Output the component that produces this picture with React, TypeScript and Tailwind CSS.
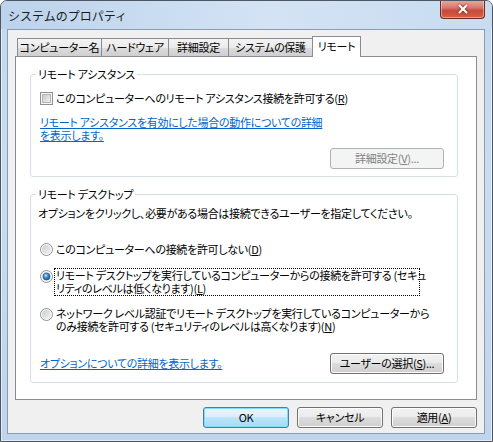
import { X } from 'lucide-react'

const tabs = [
  { label: 'コンピューター名', w: 'w-[85px]' },
  { label: 'ハードウェア', w: 'w-[68px]' },
  { label: '詳細設定', w: 'w-[61px]' },
  { label: 'システムの保護', w: 'w-[85px]' },
]

function Radio({ checked, className = '' }: { checked?: boolean; className?: string }) {
  return (
    <svg width="13" height="13" viewBox="0 0 13 13" className={`shrink-0 ${className}`}>
      <defs>
        <linearGradient id="rfill" x1="0" y1="0" x2="1" y2="1">
          <stop offset="0" stopColor="#c9cbce" />
          <stop offset="1" stopColor="#f4f4f4" />
        </linearGradient>
        <radialGradient id="rdot" cx="0.4" cy="0.35" r="0.7">
          <stop offset="0" stopColor="#c4e8fd" />
          <stop offset="0.45" stopColor="#3a8fd6" />
          <stop offset="1" stopColor="#14508c" />
        </radialGradient>
      </defs>
      <circle cx="6.5" cy="6.5" r="6" fill="#ffffff" stroke="#8e8f8f" />
      <circle cx="6.5" cy="6.5" r="4.5" fill="url(#rfill)" />
      {checked && <circle cx="6.5" cy="6.5" r="3.5" fill="url(#rdot)" stroke="#1c5180" strokeWidth="0.6" />}
    </svg>
  )
}

function Checkbox() {
  return (
    <svg width="13" height="13" viewBox="0 0 13 13" className="shrink-0">
      <defs>
        <linearGradient id="cfill" x1="0" y1="0" x2="1" y2="1">
          <stop offset="0" stopColor="#c3c6cb" />
          <stop offset="1" stopColor="#f3f3f3" />
        </linearGradient>
      </defs>
      <rect x="0.5" y="0.5" width="12" height="12" fill="#f6f6f6" stroke="#8e8f8f" />
      <rect x="2.5" y="2.5" width="8" height="8" fill="url(#cfill)" stroke="#b3b6ba" />
    </svg>
  )
}

function Button({ children, w, kind = 'normal', className = '' }: { children: React.ReactNode; w: string; kind?: 'normal' | 'default' | 'disabled'; className?: string }) {
  const look =
    kind === 'default'
      ? 'border-[#3c7fb1] bg-[linear-gradient(#e9f5fc,#d9effb_50%,#bde5fb_50%,#a8d9f4)] shadow-[inset_0_0_0_1px_#7fdcfd]'
      : kind === 'disabled'
      ? 'border-[#adb2b5] bg-[#f4f4f4] text-[#838383]'
      : 'border-[#707070] bg-[linear-gradient(#f2f2f2,#ebebeb_50%,#dddddd_50%,#cfcfcf)] shadow-[inset_0_0_0_1px_#fcfcfc]'
  return (
    <div className={`${w} h-[21px] shrink-0 flex items-center justify-center rounded-[3px] border whitespace-nowrap ${look} ${className}`}>
      {children}
    </div>
  )
}

function Key({ k }: { k: string }) {
  return <span className="underline underline-offset-1">{k}</span>
}

export default function App() {
  return (
    <div className="w-[493px] h-[442px] flex flex-col border border-[#4e5662] rounded-t-[7px] bg-[linear-gradient(#c3d8ef,#c9dcf1_40%,#bfd5ee)] shadow-[inset_0_0_0_1px_rgba(255,255,255,0.55)] text-black text-[11px] leading-[13px] tracking-[-0.3px] font-['Noto_Sans_CJK_JP',sans-serif] [font-feature-settings:'palt'] overflow-hidden">

      {/* Title bar */}
      <div className="h-[28px] shrink-0 flex items-start justify-between pl-[7px] pr-[7px] bg-[linear-gradient(to_right,#bcd3ec,#d3e3f4_55%,#c8dbf0)]">
        <span className="mt-[7px] text-[12px] leading-[16px] tracking-normal [font-feature-settings:normal] text-[#1a1a1a]">システムのプロパティ</span>
        <div className="w-[45px] h-[19px] -mt-px flex items-center justify-center rounded-b-[4px] border border-[#6b2a22] border-t-0 bg-[linear-gradient(#e8aca3,#d77d70_40%,#c7483a_60%,#d8623f)] shadow-[inset_0_0_0_1px_rgba(255,220,210,0.5)]">
          <X size={14} strokeWidth={3.5} className="text-white drop-shadow-[0_0_1px_#4a1a14]" />
        </div>
      </div>

      {/* Client area */}
      <div className="flex-1 ml-[6px] mr-[7px] mb-[7px] border border-[#8c9bb0] bg-[#f0f0f0] px-[7px] pt-[6px] flex flex-col">

        {/* Tabs */}
        <div className="h-[20px] flex items-end pl-[2px]">
          {tabs.map((t, i) => (
            <div
              key={t.label}
              className={`${t.w} h-[18px] ${i > 0 ? '-ml-px' : ''} flex items-center justify-center border border-b-0 border-[#898c95] bg-[linear-gradient(#f3f3f3,#ebebeb_50%,#dddddd_50%,#cfcfcf)] whitespace-nowrap`}
            >
              {t.label}
            </div>
          ))}
          <div className="w-[49px] h-[21px] -ml-px -mb-px relative z-10 flex items-start justify-center pt-[3px] border border-b-0 border-[#898c95] bg-white">
            リモート
          </div>
        </div>

        {/* Tab panel */}
        <div className="h-[344px] shrink-0 border border-[#898c95] bg-white pl-[14px] pr-[18px] pt-[11px] flex flex-col">

          <fieldset className="border border-[#d5dfe5] rounded-[3px] flex flex-col pb-[7px]">
            <legend className="ml-[5px] px-[2px] leading-[13px]">リモート アシスタンス</legend>
            <div className="mt-[11px] ml-[9px] flex items-center gap-[3px] whitespace-nowrap">
              <Checkbox />
              <span>このコンピューターへのリモート アシスタンス接続を許可する(<Key k="R" />)</span>
            </div>
            <div className="mt-[11px] ml-[9px] text-[#0066cc] underline underline-offset-1 whitespace-nowrap">
              リモート アシスタンスを有効にした場合の動作についての詳細
              <br />
              を表示します。
            </div>
            <div className="mt-[6px] mr-[13px] flex justify-end">
              <Button w="w-[114px]" kind="disabled" className="h-[20px]">
                詳細設定(<Key k="V" />)...
              </Button>
            </div>
          </fieldset>

          <fieldset className="mt-[11px] border border-[#d5dfe5] rounded-[3px] flex flex-col pb-[8px]">
            <legend className="ml-[5px] px-[2px] leading-[13px]">リモート デスクトップ</legend>
            <div className="mt-[6px] ml-[7px] whitespace-nowrap">
              オプションをクリックし、必要がある場合は接続できるユーザーを指定してください。
            </div>

            <div className="mt-[23px] ml-[9px] flex items-start gap-[3px] whitespace-nowrap">
              <Radio />
              <span>このコンピューターへの接続を許可しない(<Key k="D" />)</span>
            </div>

            <div className="mt-[12px] ml-[9px] flex items-start gap-[1px] whitespace-nowrap">
              <Radio checked className="mt-[2px]" />
              <span className="w-[366px] border border-dotted border-black pl-[1px]">
                リモート デスクトップを実行しているコンピューターからの接続を許可する (セキュ
                <br />
                リティのレベルは低くなります)(<Key k="L" />)
              </span>
            </div>

            <div className="mt-[11px] ml-[9px] flex items-start gap-[3px] whitespace-nowrap">
              <Radio className="mt-[1px]" />
              <span>
                ネットワーク レベル認証でリモート デスクトップを実行しているコンピューターから
                <br />
                のみ接続を許可する (セキュリティのレベルは高くなります)(<Key k="N" />)
              </span>
            </div>

            <div className="mt-[20px] ml-[9px] mr-[13px] flex items-center justify-between">
              <span className="text-[#0066cc] underline underline-offset-1 whitespace-nowrap">
                オプションについての詳細を表示します。
              </span>
              <Button w="w-[114px]">
                ユーザーの選択(<Key k="S" />)...
              </Button>
            </div>
          </fieldset>
        </div>

        {/* Dialog buttons */}
        <div className="mt-[7px] flex justify-end gap-[8px]">
          <Button w="w-[86px]" kind="default">OK</Button>
          <Button w="w-[86px]">キャンセル</Button>
          <Button w="w-[86px]">適用(<Key k="A" />)</Button>
        </div>
      </div>
    </div>
  )
}
